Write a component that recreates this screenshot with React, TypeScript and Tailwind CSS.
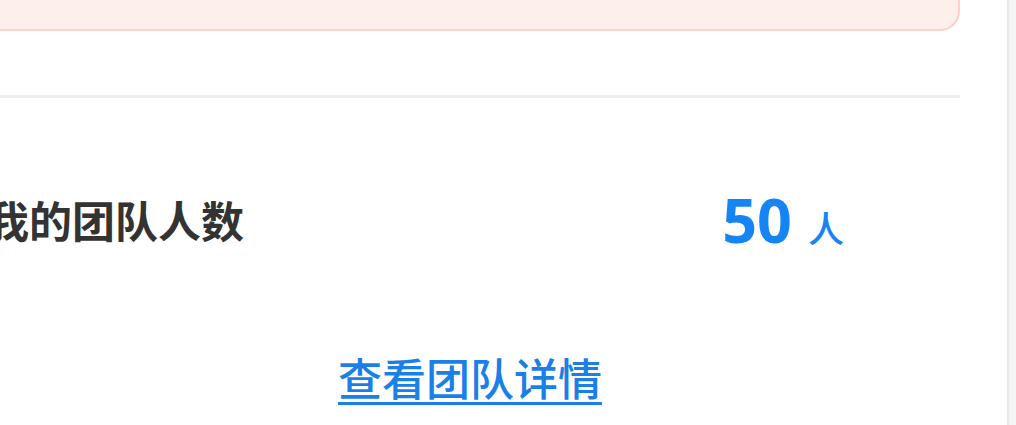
const cjk = { fontFamily: '"Noto Sans CJK SC", "Noto Sans", sans-serif' };
const num = { fontFamily: '"Noto Sans", "Noto Sans CJK SC", sans-serif' };

export default function App() {
  return (
    <div className="flex h-[425px] w-[1016px] overflow-hidden bg-white">
      <div className="min-w-0 flex-1 overflow-hidden">
        <div className="ml-[-20px] w-[980px]">
          {/* notice card, mostly scrolled off the top */}
          <div className="h-[31px] rounded-b-[20px] border-2 border-t-0 border-[#f8d4c6] bg-[#fdf0eb]" />

          <div className="mt-[64px] h-[3px] bg-[#ededed]" />

          <div className="flex h-[242px] items-center justify-between pl-[6px] pr-[116px]">
            <span className="text-[43px] font-semibold leading-none text-[#333333]" style={cjk}>
              我的团队人数
            </span>
            <span className="flex items-baseline text-[#1585f5]">
              <span className="text-[61px] font-bold leading-none" style={num}>
                50
              </span>
              <span className="ml-[16px] text-[36px] font-medium leading-none" style={cjk}>
                人
              </span>
            </span>
          </div>

          <div className="mt-[11px] flex justify-center">
            <a
              href="#"
              className="text-[44px] font-medium leading-[53px] text-[#1a7fe6] underline decoration-[3px] underline-offset-[6px]"
              style={cjk}
            >
              查看团队详情
            </a>
          </div>
        </div>
      </div>
      <div className="w-[9px] border-l-2 border-[#e9e9e9] bg-[#f4f4f4]" />
    </div>
  );
}
